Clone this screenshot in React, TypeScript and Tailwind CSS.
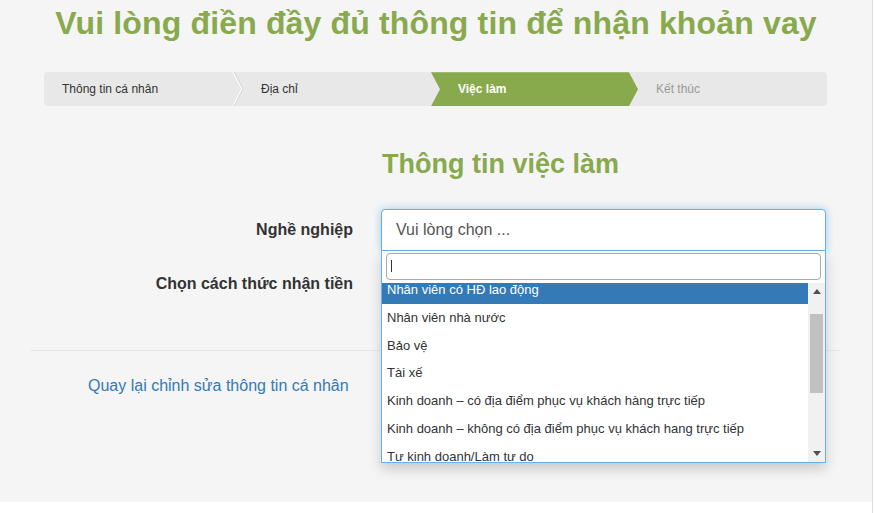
import React from 'react';

const GREEN = 'text-[#89a94d]';

const options = [
    'Nhân viên có HĐ lao động',
    'Nhân viên nhà nước',
    'Bảo vệ',
    'Tài xế',
    'Kinh doanh – có địa điểm phục vụ khách hàng trực tiếp',
    'Kinh doanh – không có địa điểm phục vụ khách hang trực tiếp',
    'Tự kinh doanh/Làm tự do',
];

const Chevron = () => (
    <svg width="10" height="34" viewBox="0 0 10 34" className="shrink-0">
        <polyline points="0,0 9,17 0,34" fill="none" stroke="#ffffff" strokeWidth="1.5" />
        <polyline points="1,0 10,17 1,34" fill="none" stroke="#d2d2d2" strokeWidth="1" />
    </svg>
);

const Arrow = ({ up }: { up?: boolean }) => (
    <div className="flex h-[17px] items-center justify-center">
        <svg width="8" height="5" viewBox="0 0 8 5">
            <polygon points={up ? '0,5 4,0 8,5' : '0,0 8,0 4,5'} fill="#505050" />
        </svg>
    </div>
);

export default function App() {
    return (
        <div className="flex h-[513px] w-[874px] bg-white font-['Liberation_Sans',Arial,sans-serif]">
            <div className="h-[502px] w-[872px] bg-[#f5f5f5]">
                {/* Heading */}
                <h1 className={`pt-[6px] text-center text-[32px] font-bold leading-[1.1] tracking-[0.15px] ${GREEN}`}>
                    Vui lòng điền đầy đủ thông tin để nhận khoản vay
                </h1>

                {/* Steps */}
                <div className="ml-[44px] mt-[31px] flex h-[34px] w-[783px] overflow-hidden rounded-[4px] bg-[#e8e8e8] text-[12px]">
                    <div className="flex w-[199px] items-center justify-between pl-[18px] text-[#333]">
                        <span>Thông tin cá nhân</span>
                        <Chevron />
                    </div>
                    <div className="flex w-[188px] items-center pl-[18px] text-[#333]">Địa chỉ</div>
                    <div className="flex w-[207px] items-center bg-[#89a94d] pl-[27px] font-bold text-white [clip-path:polygon(0_0,198px_0,207px_50%,198px_100%,0_100%,9px_50%)]">
                        Việc làm
                    </div>
                    <div className="flex flex-1 items-center pl-[18px] text-[#999]">Kết thúc</div>
                </div>

                <h2 className={`mt-[44px] pl-[382px] text-[27px] font-bold leading-[1.1] ${GREEN}`}>
                    Thông tin việc làm
                </h2>

                <div className="ml-[30px] w-[810px]">
                    {/* Nghề nghiệp */}
                    <div className="mt-[29px] flex h-[42px]">
                        <label className="flex w-[338px] items-center justify-end pr-[15px] text-[16px] font-bold text-[#333]">
                            Nghề nghiệp
                        </label>
                        <div className="relative ml-[13px] w-[445px]">
                            <div className="flex h-[42px] items-center rounded-t-[4px] border border-[#66afe9] bg-white pl-[14px] text-[16px] text-[#555] shadow-[0_0_8px_rgba(102,175,233,0.6)]">
                                Vui lòng chọn ...
                            </div>
                            {/* open dropdown */}
                            <div className="absolute left-0 top-[42px] z-10 w-[445px] border border-t-0 border-[#66afe9] bg-white shadow-[0_6px_12px_rgba(0,0,0,0.18)]">
                                <div className="px-[4px] pb-[3px] pt-[2px]">
                                    <div className="flex h-[27px] items-center rounded-[4px] border border-[#aaa] bg-white pl-[4px]">
                                        <span className="h-[12px] w-px bg-[#333]" />
                                    </div>
                                </div>
                                <div className="flex h-[179px]">
                                    <div className="flex-1 overflow-hidden">
                                        <div className="-mt-[7px]">
                                            {options.map((o, i) => (
                                                <div
                                                    key={o}
                                                    className={`flex h-[27.8px] items-center pl-[5px] text-[13px] ${i === 0 ? 'bg-[#337ab7] text-white' : 'text-[#333]'}`}
                                                >
                                                    {o}
                                                </div>
                                            ))}
                                        </div>
                                    </div>
                                    <div className="flex w-[17px] flex-col bg-[#f1f1f1]">
                                        <Arrow up />
                                        <div className="flex-1">
                                            <div className="ml-[2px] mt-[14px] h-[79px] w-[13px] bg-[#c1c1c1]" />
                                        </div>
                                        <Arrow />
                                    </div>
                                </div>
                            </div>
                        </div>
                    </div>

                    {/* Cách nhận tiền */}
                    <div className="mt-[12px] flex h-[42px]">
                        <label className="flex w-[338px] items-center justify-end pr-[15px] text-[16px] font-bold text-[#333]">
                            Chọn cách thức nhận tiền
                        </label>
                    </div>

                    <hr className="mt-[45px] border-t border-[#e8e8e8]" />

                    <div className="mt-[24px] pl-[58px] text-[16px] leading-[22px] text-[#337ab7]">
                        Quay lại chỉnh sửa thông tin cá nhân
                    </div>
                </div>
            </div>
            <div className="w-px bg-[#dcdcdc]" />
        </div>
    );
}
